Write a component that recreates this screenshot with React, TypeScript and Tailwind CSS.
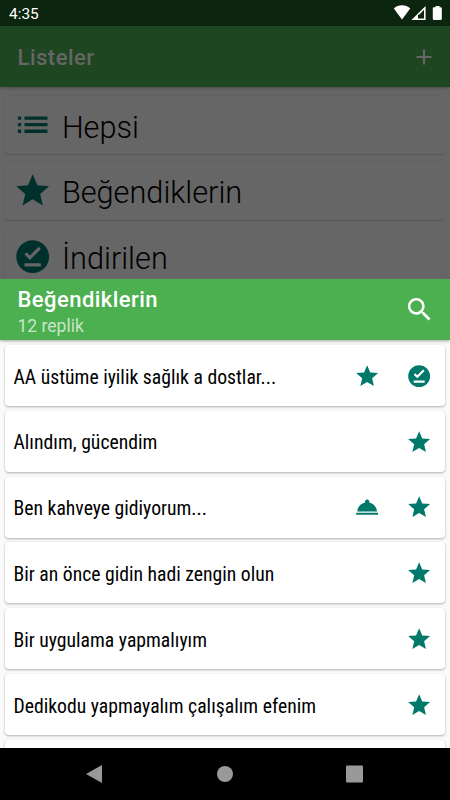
import {
  MdAdd,
  MdList,
  MdOfflinePin,
  MdRoomService,
  MdSearch,
  MdStar,
} from "react-icons/md";

const lists = [
  { name: "Hepsi", icon: MdList },
  { name: "Beğendiklerin", icon: MdStar },
  { name: "İndirilen", icon: MdOfflinePin },
];

const quotes = [
  { text: "AA üstüme iyilik sağlık a dostlar...", icons: [MdStar, MdOfflinePin] },
  { text: "Alındım, gücendim", icons: [MdStar] },
  { text: "Ben kahveye gidiyorum...", icons: [MdRoomService, MdStar] },
  { text: "Bir an önce gidin hadi zengin olun", icons: [MdStar] },
  { text: "Bir uygulama yapmalıyım", icons: [MdStar] },
  { text: "Dedikodu yapmayalım çalışalım efenim", icons: [MdStar] },
  { text: "", icons: [] },
];

export default function App() {
  return (
    <div className="flex h-[800px] w-[450px] flex-col overflow-hidden bg-[#666] font-['Roboto',sans-serif]">
      {/* Status bar */}
      <div className="flex h-[26px] shrink-0 items-center justify-between bg-[#0c250e] pr-2 pl-[9px]">
        <span className="pt-[4px] text-[15.4px] leading-none text-white">4:35</span>
        <svg width="50" height="26" viewBox="0 0 50 26" fill="#fff">
          <path d="M1.8 8.4C6.2 4.3 13.8 4.3 18.2 8.4L10 19.4z" />
          <path fillRule="evenodd" d="M19.4 20L33.6 6v14zM26 18.4h6V9.8l-4.8 4.9h-1.2z" />
          <path d="M41.4 7.3h2.2V6h4v1.3h1.2a1 1 0 0 1 1 1v10.5a1.2 1.2 0 0 1-1.2 1.2h-6.6a1.2 1.2 0 0 1-1.2-1.2V8.3a1 1 0 0 1 .6-1z" />
        </svg>
      </div>

      {/* App bar behind the sheet */}
      <div className="flex h-[61px] shrink-0 items-center justify-between bg-[#1e4620] pr-[13px] pl-[17.5px] text-[#666] shadow-[0_1px_3px_rgba(0,0,0,0.25)]">
        <h1 className="pt-[2px] text-[22px] leading-none font-medium tracking-[0.5px]">Listeler</h1>
        <MdAdd size={26} />
      </div>

      {/* Lists */}
      <div className="flex h-[192px] shrink-0 flex-col gap-[8px] overflow-hidden px-[5px] pt-[9px]">
        {lists.map(({ name, icon: Icon }) => (
          <div
            key={name}
            className="flex h-[57.8px] shrink-0 items-center rounded-[4px] pl-[8px] shadow-[0_0.5px_1.5px_rgba(0,0,0,0.16)]"
          >
            <Icon size={39.4} color="#00302b" />
            <span className="pt-[6px] pl-[9.5px] text-[30.7px] leading-none font-light text-black">{name}</span>
          </div>
        ))}
      </div>

      {/* Sheet */}
      <div className="flex h-[469px] shrink-0 flex-col overflow-hidden bg-[#fafafa]">
        <div className="z-10 flex h-[61px] shrink-0 items-center justify-between bg-[#4caf50] pr-[15.5px] pl-[17.5px] text-white shadow-[0_1px_3px_rgba(0,0,0,0.35)]">
          <div className="pt-[7px]">
            <h2 className="text-[22px] leading-[26px] font-medium tracking-[0.45px]">Beğendiklerin</h2>
            <p className="text-[17.5px] leading-[26px] text-white/70">12 replik</p>
          </div>
          <MdSearch size={31} />
        </div>
        <div className="flex flex-col gap-[4.8px] px-[5px] pt-[5px]">
          {quotes.map(({ text, icons }, i) => (
            <div
              key={i}
              className="flex h-[61px] shrink-0 items-center rounded-[4px] bg-white pr-[12.5px] pl-[8.5px] shadow-[0_1px_2.5px_rgba(0,0,0,0.3)]"
            >
              <span className="flex-1 pt-[4px] text-[19.7px] leading-none text-black [font-stretch:75%]">{text}</span>
              <div className="flex gap-[26px] pt-[1px]">
                {icons.map((Icon, j) => (
                  <Icon key={j} size={26.3} color="#00796b" />
                ))}
              </div>
            </div>
          ))}
        </div>
      </div>

      {/* Navigation bar */}
      <div className="h-[52px] shrink-0 bg-black">
        <svg width="450" height="52" viewBox="0 0 450 52" fill="#999">
          <path d="M86 26L102 17v18z" />
          <circle cx="225" cy="26" r="8" />
          <rect x="346" y="17.5" width="17" height="17" rx="1" />
        </svg>
      </div>
    </div>
  );
}
